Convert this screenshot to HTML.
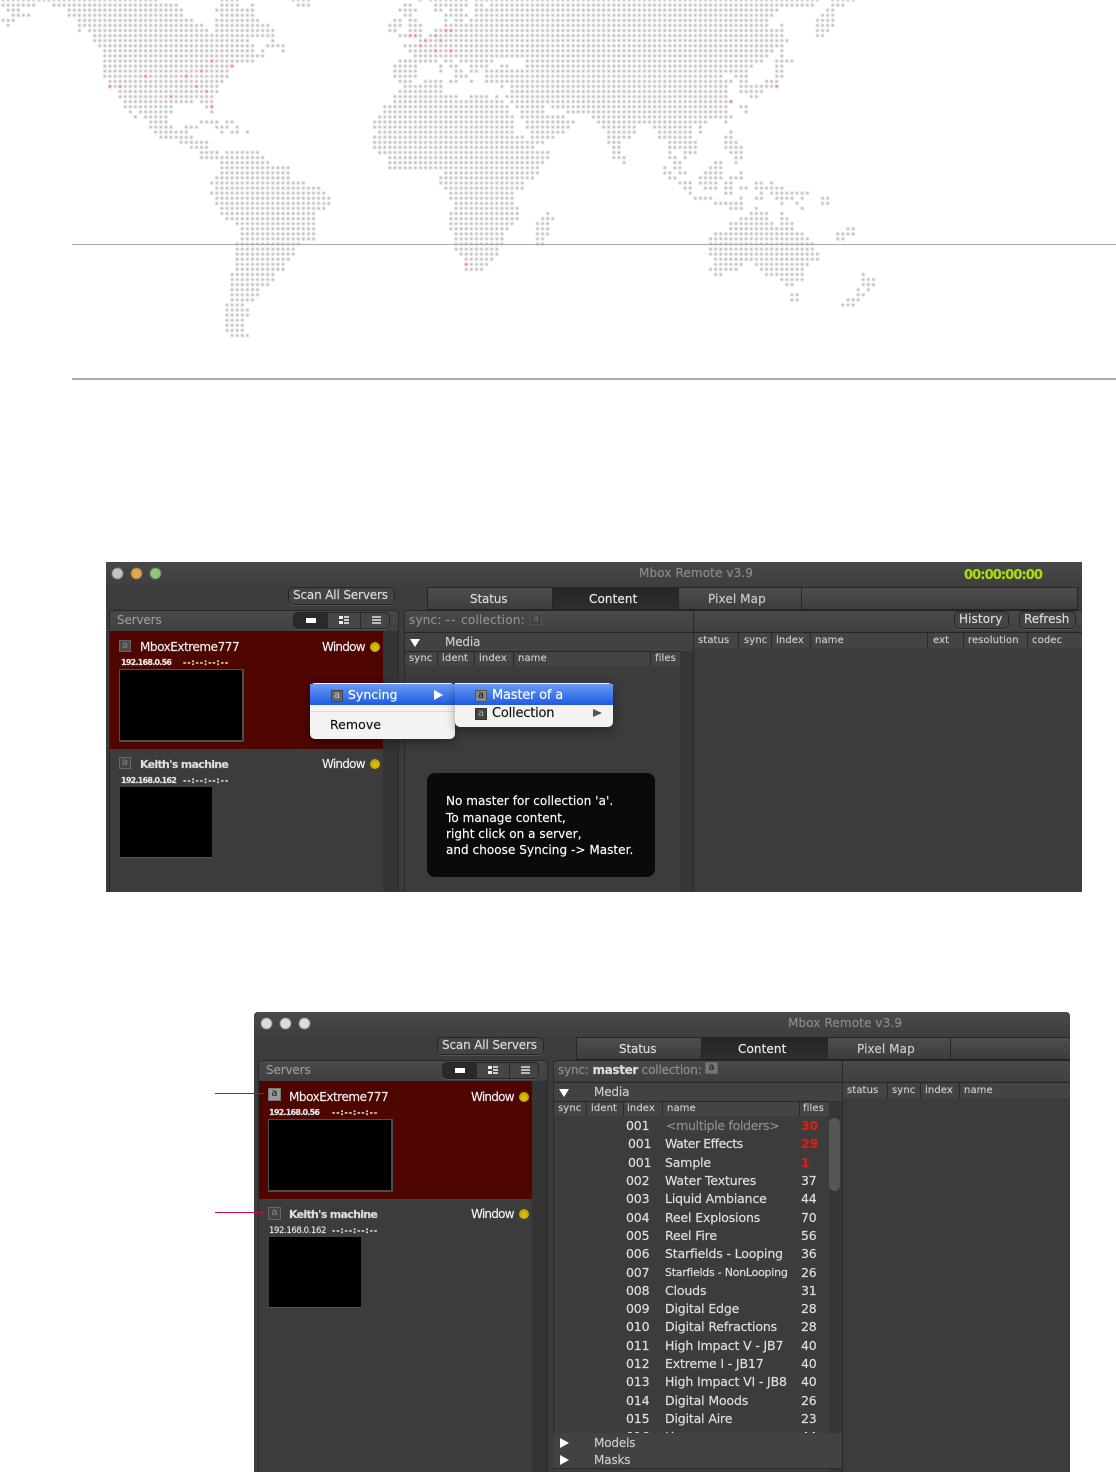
<!DOCTYPE html>
<html><head><meta charset="utf-8"><style>
html,body{margin:0;padding:0;background:#fff}
#p{position:relative;width:1116px;height:1472px;overflow:hidden;background:#fff;font-family:"DejaVu Sans","Liberation Sans",sans-serif}
#p div,#p span.a{position:absolute}
.t{white-space:nowrap;line-height:16px;height:16px;font-size:12px;color:#ddd;letter-spacing:-.15px;-webkit-text-stroke:.15px}
.w{left:0;top:0;width:1116px;height:1022px;filter:blur(.3px)}
.bg{background:#3c3c3c}
.tab{top:587px;height:21px;background:linear-gradient(#4d4d4d,#3d3d3d);border:1px solid #262626;border-bottom-color:#222;box-sizing:content-box}
.btn{background:#444;border:1px solid #262626;border-radius:5px;box-sizing:border-box;box-shadow:0 1px 0 #555}
.hd{background:linear-gradient(#494949,#404040);border-top:1px solid #262626;box-sizing:border-box}
.ln{background:#2a2a2a}
.c{font-size:10px;color:#ccc;letter-spacing:.1px;margin-top:1px}
.c2{margin-top:2px}
.tl{width:11px;height:11px;border-radius:50%;top:568px;filter:blur(.5px)}
.bd{width:12px;height:12px;box-sizing:border-box;font-size:10px;line-height:10px;text-align:center;border:1px solid #666;color:#888}
.dot{width:10px;height:10px;border-radius:50%;background:radial-gradient(circle at 50% 60%,#e2c800,#a89400)}
.s{font-size:8px;font-weight:bold;color:#e5e5e5;letter-spacing:-.75px;margin-top:1px}
.d{font-size:8px;font-weight:bold;color:#e5e5e5;letter-spacing:.9px;margin-top:1px}
.n{font-size:12px;color:#f2f2f2;letter-spacing:-.45px}
.wn{font-size:12px;color:#f2f2f2;letter-spacing:-.75px}
.k{font-size:11px;font-weight:bold;color:#ddd;letter-spacing:-.7px;margin-top:1px}
.r{font-size:12.5px;color:#e0e0e0;letter-spacing:-.15px}
.red{color:#d8201a;font-weight:bold}
.tri{width:0;height:0}
.m{font-size:13px;color:#111;letter-spacing:-.2px}
.ms{letter-spacing:.05px;color:#fff}
</style></head><body><div id="p">

<svg width="1116" height="345" style="position:absolute;left:0;top:0;filter:blur(.4px)">
<g transform="translate(1.67 0) scale(5.09 5.083)" fill="none" stroke-width=".54" stroke-dasharray=".54 .46">
<path stroke="#bdbdbd" d="M0 0H30.6M43 0H46.6M57 0H60.6M82 0H82.6M84 0H91.6M93 0H160.6M163 0H167.6
M0 1H6.6M10 1H34.6M43 1H46.6M49 1H49.6M58 1H60.6M79 1H80.6M85 1H91.6M93 1H94.6M96 1H159.6M163 1H165.6
M1 2H3.6M13 2H35.6M42 2H49.6M78 2H81.6M85 2H86.6M88 2H90.6M93 2H152.6M162 2H163.6
M2 3H5.6M13 3H35.6M43 3H49.6M79 3H80.6M87 3H91.6M93 3H151.6M161 3H163.6
M0 4H2.6M15 4H37.6M42 4H50.6M77 4H78.6M80 4H81.6M87 4H87.6M89 4H90.6M92 4H150.6M160 4H163.6
M1 5H1.6M15 5H39.6M42 5H52.6M76 5H78.6M80 5H82.6M87 5H150.6M153 5H153.6M160 5H163.6
M15 6H15.6M17 6H40.6M42 6H53.6M76 6H77.6M80 6H82.6M85 6H153.6M160 6H162.6
M18 7H53.6M78 7H82.6M84 7H153.6M160 7H161.6
M18 8H48.6M53 8H53.6M82 8H154.6
M19 9H49.6M52 9H55.6M79 9H153.6
M20 10H49.6M51 10H51.6M55 10H55.6M80 10H151.6M153 10H153.6
M20 11H51.6M81 11H150.6M153 11H153.6
M20 12H48.6M49 12H49.6M78 12H85.6M87 12H88.6M90 12H96.6M103 12H149.6M152 12H155.6
M20 13H45.6M77 13H81.6M86 13H86.6M88 13H89.6M92 13H95.6M98 13H99.6M103 13H147.6M152 13H153.6
M20 14H44.6M77 14H81.6M86 14H86.6M89 14H90.6M92 14H93.6M95 14H146.6M152 14H153.6
M20 15H44.6M77 15H81.6M89 15H91.6M95 15H141.6M144 15H146.6M152 15H153.6
M21 16H43.6M78 16H80.6M83 16H86.6M88 16H89.6M92 16H92.6M95 16H143.6M145 16H146.6M150 16H152.6
M21 17H42.6M79 17H86.6M98 17H98.6M100 17H142.6M145 17H152.6
M23 18H42.6M78 18H86.6M100 18H142.6M145 18H149.6
M23 19H41.6M77 19H89.6M92 19H95.6M97 19H97.6M99 19H142.6M147 19H148.6
M24 20H37.6M39 20H41.6M77 20H98.6M100 20H143.6
M24 21H33.6M40 21H41.6M75 21H99.6M101 21H106.6M108 21H142.6M145 21H146.6
M25 22H25.6M27 22H33.6M41 22H41.6M75 22H99.6M102 22H106.6M111 22H142.6M146 22H146.6
M26 23H26.6M28 23H32.6M74 23H100.6M102 23H110.6M116 23H143.6
M29 24H32.6M39 24H42.6M44 24H45.6M73 24H100.6M103 24H112.6M117 24H138.6M142 24H142.6
M29 25H33.6M36 25H38.6M42 25H44.6M46 25H46.6M73 25H100.6M103 25H111.6M118 25H124.6M128 25H135.6M137 25H137.6
M30 26H36.6M43 26H43.6M45 26H46.6M48 26H48.6M74 26H100.6M104 26H110.6M119 26H124.6M129 26H135.6M137 26H137.6M143 26H143.6
M31 27H37.6M73 27H102.6M104 27H108.6M119 27H123.6M129 27H135.6M142 27H143.6
M35 28H40.6M73 28H106.6M119 28H121.6M131 28H136.6M142 28H144.6
M37 29H40.6M73 29H104.6M120 29H121.6M131 29H136.6M142 29H145.6
M39 30H42.6M44 30H50.6M74 30H107.6M120 30H121.6M131 30H131.6M134 30H136.6M143 30H145.6
M39 31H51.6M76 31H107.6M120 31H122.6M131 31H132.6M134 31H134.6M144 31H145.6
M43 32H52.6M76 32H106.6M122 32H122.6M132 32H133.6M140 32H141.6M144 32H144.6
M43 33H56.6M76 33H105.6M130 33H130.6M132 33H133.6M139 33H141.6
M43 34H56.6M87 34H105.6M130 34H131.6M133 34H134.6M138 34H141.6M145 34H145.6
M42 35H56.6M86 35H104.6M131 35H132.6M137 35H141.6M143 35H144.6M145 35H145.6
M41 36H59.6M86 36H102.6M133 36H135.6M137 36H140.6M142 36H143.6M148 36H149.6M151 36H151.6
M42 37H62.6M87 37H102.6M134 37H135.6M138 37H140.6M142 37H143.6M145 37H146.6M148 37H153.6
M41 38H63.6M88 38H100.6M135 38H135.6M142 38H143.6M149 38H149.6M151 38H158.6
M42 39H64.6M88 39H100.6M136 39H139.6M145 39H145.6M148 39H149.6M152 39H155.6M157 39H157.6M161 39H162.6
M42 40H64.6M89 40H100.6M140 40H145.6M153 40H153.6M156 40H156.6M161 40H162.6
M43 41H63.6M89 41H101.6M143 41H145.6M148 41H148.6M157 41H157.6
M43 42H61.6M88 42H101.6M107 42H107.6M147 42H150.6M153 42H153.6
M44 43H61.6M88 43H101.6M106 43H108.6M145 43H150.6M153 43H154.6
M46 44H61.6M88 44H100.6M105 44H107.6M143 44H151.6M153 44H155.6
M47 45H61.6M88 45H99.6M105 45H107.6M143 45H155.6M166 45H167.6
M47 46H61.6M89 46H98.6M105 46H107.6M140 46H157.6M164 46H167.6
M47 47H61.6M89 47H98.6M105 47H106.6M139 47H158.6M164 47H165.6
M46 48H58.6M89 48H98.6M105 48H106.6M139 48H159.6
M46 49H57.6M89 49H97.6M139 49H159.6
M46 50H57.6M90 50H97.6M139 50H160.6
M46 51H56.6M91 51H96.6M140 51H160.6
M46 52H55.6M91 52H95.6M140 52H145.6M148 52H158.6
M46 53H55.6M91 53H94.6M139 53H144.6M149 53H157.6
M45 54H53.6M140 54H141.6M150 54H157.6M169 54H169.6
M45 55H53.6M153 55H157.6M169 55H171.6
M45 56H52.6M154 56H155.6M169 56H171.6
M45 57H50.6M168 57H168.6M170 57H170.6
M45 58H50.6M155 58H156.6M168 58H169.6
M45 59H49.6M155 59H156.6M166 59H168.6
M44 60H47.6M165 60H167.6
M44 61H48.6M44 62H48.6M44 63H47.6M44 64H47.6M44 65H47.6M45 66H48.6"/>
<path stroke="#f07c7c" d="M41 12H41.6M45 13H45.6M39 14H39.6M28 15H28.6M36 15H36.6M21 17H21.6M23 17H23.6M38 17H38.6M40 18H40.6M33 19H33.6M41 21H41.6M87 6H88.6M80 7H81.6M85 7H85.6M83 8H83.6M86 8H86.6M82 9H82.6M85 10H85.6M88 10H88.6M91 52H91.6M152 17H152.6M143 20H143.6"/>
</g></svg>
<div style="left:72px;top:244px;width:1044px;height:1px;background:#aaa"></div>
<div style="left:72px;top:378px;width:1044px;height:2px;background:#aaa"></div>

<!-- WINDOW 1 -->
<div class="w">
<div class="bg" style="left:106px;top:562px;width:976px;height:330px"></div>
<div style="left:106px;top:562px;width:976px;height:25px;background:linear-gradient(#474747,#3e3e3e)"></div>
<div class="tl" style="left:112px;background:#c4c4c4"></div><div class="tl" style="left:131px;background:#e2a64a"></div><div class="tl" style="left:150px;background:#8ec777"></div>
<div class="t" style="left:639px;top:565px;color:#8c8c8c;letter-spacing:.12px">Mbox Remote v3.9</div>
<div class="t" style="left:964px;top:568px;color:#a6dc0a;font-weight:bold;font-size:13px;letter-spacing:-.9px">00:00:00:00</div>
<div class="btn" style="left:288px;top:587px;width:107px;height:18px"></div>
<div class="t" style="left:293px;top:587px;color:#ddd">Scan All Servers</div>
<div class="tab" style="left:427px;width:124px"></div><div class="tab" style="left:552px;width:125px;background:linear-gradient(#262626,#2e2e2e)"></div><div class="tab" style="left:678px;width:122px"></div><div class="tab" style="left:801px;width:275px"></div>
<div class="t" style="left:470px;top:591px;color:#ddd">Status</div><div class="t" style="left:589px;top:591px;color:#eee;letter-spacing:.1px">Content</div><div class="t" style="left:708px;top:591px;color:#ccc;letter-spacing:.1px">Pixel Map</div>

<div class="hd" style="left:109px;top:610px;width:289px;height:21px;border-radius:5px 5px 0 0"></div>
<div class="t" style="left:117px;top:612px;color:#9a9a9a">Servers</div>
<div class="btn" style="left:293px;top:612px;width:97px;height:17px;background:#464646"></div>
<div style="left:294px;top:613px;width:34px;height:15px;background:#2a2a2a;border-radius:4px 0 0 4px"></div>
<div style="left:306px;top:618px;width:10px;height:5px;background:#fff"></div>
<div style="left:360px;top:613px;width:1px;height:15px;background:#2a2a2a"></div>
<div style="left:339px;top:616px;width:4px;height:3px;background:#eee;box-shadow:0 5px 0 #eee"></div><div style="left:344px;top:616px;width:5px;height:9px;background:repeating-linear-gradient(#ccc 0 2px,#444 2px 3px)"></div>
<div style="left:372px;top:616px;width:9px;height:9px;background:repeating-linear-gradient(#bbb 0 2px,#444 2px 3px)"></div>
<div style="left:110px;top:631px;width:273px;height:118px;background:#4f0500"></div>
<div style="left:383px;top:631px;width:15px;height:261px;background:#343434"></div>
<div class="ln" style="left:109px;top:610px;width:1px;height:282px"></div><div class="ln" style="left:398px;top:610px;width:1px;height:282px"></div>
<div class="bd" style="left:119px;top:640px;background:#4a4a4a">a</div>
<div class="t n" style="left:140px;top:639px">MboxExtreme777</div>
<div class="t wn" style="left:322px;top:639px">Window</div><div class="dot" style="left:370px;top:642px"></div>
<div class="t s" style="left:121px;top:654px">192.168.0.56</div><div class="t d" style="left:183px;top:654px">--:--:--:--</div>
<div style="left:119px;top:669px;width:122px;height:70px;background:#000;border:2px solid #4d4d4d;border-width:1px 2px 2px 1px"></div>
<div class="bd" style="left:119px;top:757px;background:#444;border-color:#666">a</div>
<div class="t k" style="left:140px;top:756px">Keith's machine</div>
<div class="t wn" style="left:322px;top:756px">Window</div><div class="dot" style="left:370px;top:759px"></div>
<div class="t s" style="left:121px;top:772px">192.168.0.162</div><div class="t d" style="left:183px;top:772px">--:--:--:--</div>
<div style="left:120px;top:787px;width:92px;height:70px;background:#000;border-bottom:1px solid #555"></div>

<div class="hd" style="left:404px;top:610px;width:289px;height:21px;border-radius:5px 0 0 0"></div>
<div class="t" style="left:409px;top:612px;color:#8f8f8f;letter-spacing:.2px">sync: <span style="letter-spacing:1.4px">--</span> collection:</div>
<div class="bd" style="left:530px;top:613px;background:#3f3f3f;border-color:#555;color:#777">a</div>
<div class="hd" style="left:404px;top:632px;width:289px;height:19px;background:#424242"></div>
<div class="tri" style="left:410px;top:639px;border-left:5px solid transparent;border-right:5px solid transparent;border-top:8px solid #fff"></div>
<div class="t" style="left:445px;top:634px;color:#ccc">Media</div>
<div class="hd" style="left:404px;top:651px;width:276px;height:15px;background:#444"></div>
<div class="t c" style="left:409px;top:650px">sync</div><div class="t c" style="left:442px;top:650px">ident</div><div class="t c" style="left:479px;top:650px">index</div><div class="t c" style="left:518px;top:650px">name</div><div class="t c" style="left:655px;top:650px">files</div>
<div class="ln" style="left:437px;top:652px;width:1px;height:14px"></div><div class="ln" style="left:474px;top:652px;width:1px;height:14px"></div><div class="ln" style="left:513px;top:652px;width:1px;height:14px"></div><div class="ln" style="left:650px;top:652px;width:1px;height:14px"></div>
<div style="left:680px;top:651px;width:13px;height:241px;background:#363636"></div>
<div class="ln" style="left:404px;top:610px;width:1px;height:282px"></div><div class="ln" style="left:693px;top:610px;width:1px;height:282px"></div>

<div class="hd" style="left:694px;top:610px;width:388px;height:21px"></div>
<div class="btn" style="left:954px;top:611px;width:55px;height:18px"></div><div class="t" style="left:959px;top:611px;color:#ddd;letter-spacing:.1px">History</div>
<div class="btn" style="left:1019px;top:611px;width:57px;height:18px"></div><div class="t" style="left:1024px;top:611px;color:#ddd;letter-spacing:0">Refresh</div>
<div class="hd" style="left:694px;top:632px;width:388px;height:16px;background:#444"></div>
<div class="t c c2" style="left:698px;top:631px">status</div><div class="t c c2" style="left:744px;top:631px">sync</div><div class="t c c2" style="left:776px;top:631px">index</div><div class="t c c2" style="left:815px;top:631px">name</div><div class="t c c2" style="left:933px;top:631px">ext</div><div class="t c c2" style="left:968px;top:631px">resolution</div><div class="t c c2" style="left:1032px;top:631px">codec</div>
<div class="ln" style="left:738px;top:633px;width:1px;height:15px"></div><div class="ln" style="left:771px;top:633px;width:1px;height:15px"></div><div class="ln" style="left:810px;top:633px;width:1px;height:15px"></div><div class="ln" style="left:927px;top:633px;width:1px;height:15px"></div><div class="ln" style="left:963px;top:633px;width:1px;height:15px"></div><div class="ln" style="left:1027px;top:633px;width:1px;height:15px"></div>

<div style="left:427px;top:773px;width:228px;height:104px;background:#0a0a0a;border-radius:8px"></div>
<div class="t ms" style="left:446px;top:793px">No master for collection 'a'.</div>
<div class="t ms" style="left:446px;top:810px">To manage content,</div>
<div class="t ms" style="left:446px;top:826px">right click on a server,</div>
<div class="t ms" style="left:446px;top:842px">and choose Syncing -&gt; Master.</div>

<div style="left:310px;top:683px;width:145px;height:56px;background:#f5f3f1;border-radius:5px;box-shadow:0 4px 10px rgba(0,0,0,.35)"></div>
<div style="left:310px;top:684px;width:145px;height:21px;background:linear-gradient(#6b9bf3,#1d5be2)"></div>
<div style="left:310px;top:711px;width:145px;height:1px;background:#ddd"></div>
<div class="bd" style="left:331px;top:690px;background:#666;border-color:#444;color:#ccc">a</div>
<div class="t m" style="left:348px;top:687px;color:#fff;font-size:12.5px;letter-spacing:0">Syncing</div>
<div class="tri" style="left:434px;top:690px;border-top:5px solid transparent;border-bottom:5px solid transparent;border-left:9px solid #fff"></div>
<div class="t m" style="left:330px;top:717px;font-size:12.5px;letter-spacing:.05px">Remove</div>
<div style="left:455px;top:683px;width:158px;height:44px;background:#f5f3f1;border-radius:0 5px 5px 5px;box-shadow:0 4px 10px rgba(0,0,0,.35)"></div>
<div style="left:455px;top:684px;width:158px;height:21px;background:linear-gradient(#6b9bf3,#1d5be2)"></div>
<div class="bd" style="left:475px;top:690px;background:#888;border-color:#555;color:#111">a</div>
<div class="t m" style="left:492px;top:688px;color:#fff">Master of a</div>
<div class="bd" style="left:475px;top:708px;background:#444;border-color:#333;color:#aaa">a</div>
<div class="t m" style="left:492px;top:706px">Collection</div>
<div class="tri" style="left:593px;top:709px;border-top:4.5px solid transparent;border-bottom:4.5px solid transparent;border-left:9px solid #555"></div>
</div>

<!-- WINDOW 2 -->
<div class="w" style="left:149px;top:450px">
<div class="bg" style="left:105px;top:562px;width:816px;height:460px;border-radius:4px 4px 0 0"></div>
<div style="left:105px;top:562px;width:816px;height:25px;background:linear-gradient(#494949,#3e3e3e);border-radius:4px 4px 0 0"></div>
<div class="tl" style="left:112px;background:#ddd"></div><div class="tl" style="left:131px;background:#ddd"></div><div class="tl" style="left:150px;background:#ddd"></div>
<div class="t" style="left:639px;top:565px;color:#8c8c8c;letter-spacing:.12px">Mbox Remote v3.9</div>
<div class="btn" style="left:288px;top:587px;width:107px;height:18px"></div>
<div class="t" style="left:293px;top:587px;color:#ddd">Scan All Servers</div>
<div class="tab" style="left:427px;width:124px"></div><div class="tab" style="left:552px;width:125px;background:linear-gradient(#262626,#2e2e2e)"></div><div class="tab" style="left:678px;width:122px"></div><div class="tab" style="left:801px;width:119px;border-right:0"></div>
<div class="t" style="left:470px;top:591px;color:#ddd">Status</div><div class="t" style="left:589px;top:591px;color:#eee;letter-spacing:.1px">Content</div><div class="t" style="left:708px;top:591px;color:#ccc;letter-spacing:.1px">Pixel Map</div>

<div class="hd" style="left:109px;top:610px;width:289px;height:21px;border-radius:5px 5px 0 0"></div>
<div class="t" style="left:117px;top:612px;color:#9a9a9a">Servers</div>
<div class="btn" style="left:293px;top:612px;width:97px;height:17px;background:#464646"></div>
<div style="left:294px;top:613px;width:34px;height:15px;background:#2a2a2a;border-radius:4px 0 0 4px"></div>
<div style="left:306px;top:618px;width:10px;height:5px;background:#fff"></div>
<div style="left:360px;top:613px;width:1px;height:15px;background:#2a2a2a"></div>
<div style="left:339px;top:616px;width:4px;height:3px;background:#eee;box-shadow:0 5px 0 #eee"></div><div style="left:344px;top:616px;width:5px;height:9px;background:repeating-linear-gradient(#ccc 0 2px,#444 2px 3px)"></div>
<div style="left:372px;top:616px;width:9px;height:9px;background:repeating-linear-gradient(#bbb 0 2px,#444 2px 3px)"></div>
<div style="left:110px;top:631px;width:273px;height:118px;background:#4f0500"></div>
<div style="left:383px;top:631px;width:15px;height:391px;background:#343434"></div>
<div class="ln" style="left:109px;top:610px;width:1px;height:412px"></div><div class="ln" style="left:398px;top:610px;width:1px;height:412px"></div>
<div class="bd" style="left:119px;top:638px;background:#999;border-color:#777;color:#111;width:13px;height:13px">a</div>
<div class="t n" style="left:140px;top:639px">MboxExtreme777</div>
<div class="t wn" style="left:322px;top:639px">Window</div><div class="dot" style="left:370px;top:642px"></div>
<div class="t s" style="left:120px;top:654px">192.168.0.56</div><div class="t d" style="left:183px;top:654px">--:--:--:--</div>
<div style="left:119px;top:669px;width:122px;height:70px;background:#000;border:2px solid #4d4d4d;border-width:1px 2px 2px 1px"></div>
<div class="bd" style="left:119px;top:757px;background:#444;border-color:#666;width:13px;height:13px">a</div>
<div class="t k" style="left:140px;top:756px">Keith's machine</div>
<div class="t wn" style="left:322px;top:756px">Window</div><div class="dot" style="left:370px;top:759px"></div>
<div class="t s" style="left:120px;top:772px;font-weight:normal;font-size:8.5px;letter-spacing:-.4px">192.168.0.162</div><div class="t d" style="left:183px;top:772px">--:--:--:--</div>
<div style="left:120px;top:787px;width:92px;height:70px;background:#000;border-bottom:1px solid #555"></div>

<div class="hd" style="left:404px;top:610px;width:289px;height:21px;border-radius:5px 0 0 0"></div>
<div class="t" style="left:409px;top:612px;color:#8f8f8f">sync: <b style="color:#ddd;letter-spacing:-.35px">master</b> collection:</div>
<div class="bd" style="left:556px;top:612px;background:#777;border-color:#666;color:#111;width:13px;height:12px">a</div>
<div class="hd" style="left:404px;top:632px;width:289px;height:19px;background:#424242"></div>
<div class="tri" style="left:410px;top:639px;border-left:5px solid transparent;border-right:5px solid transparent;border-top:8px solid #fff"></div>
<div class="t" style="left:445px;top:634px;color:#ccc">Media</div>
<div class="hd" style="left:404px;top:651px;width:276px;height:15px;background:#444"></div>
<div class="t c" style="left:409px;top:650px">sync</div><div class="t c" style="left:442px;top:650px">ident</div><div class="t c" style="left:478px;top:650px">index</div><div class="t c" style="left:518px;top:650px">name</div><div class="t c" style="left:654px;top:650px">files</div>
<div class="ln" style="left:437px;top:652px;width:1px;height:14px"></div><div class="ln" style="left:474px;top:652px;width:1px;height:14px"></div><div class="ln" style="left:513px;top:652px;width:1px;height:14px"></div><div class="ln" style="left:650px;top:652px;width:1px;height:14px"></div>
<div style="left:680px;top:651px;width:13px;height:371px;background:#363636"></div>
<div style="left:680px;top:668px;width:11px;height:73px;background:#565656;border-radius:6px"></div>
<div class="ln" style="left:404px;top:610px;width:1px;height:412px"></div><div class="ln" style="left:693px;top:610px;width:1px;height:412px"></div>

<div class="t r" style="left:477px;top:668px">001</div><div class="t r" style="left:517px;top:668px;color:#8f8f8f;letter-spacing:-.3px">&lt;multiple folders&gt;</div><div class="t r red" style="left:652px;top:668px">30</div>
<div class="t r" style="left:479px;top:686px">001</div><div class="t r" style="left:516px;top:686px;letter-spacing:-.45px">Water Effects</div><div class="t r red" style="left:652px;top:686px">29</div>
<div class="t r" style="left:479px;top:705px">001</div><div class="t r" style="left:516px;top:705px">Sample</div><div class="t r red" style="left:652px;top:705px">1</div>
<div class="t r" style="left:477px;top:723px">002</div><div class="t r" style="left:516px;top:723px">Water Textures</div><div class="t r" style="left:652px;top:723px">37</div>
<div class="t r" style="left:477px;top:741px">003</div><div class="t r" style="left:516px;top:741px">Liquid Ambiance</div><div class="t r" style="left:652px;top:741px">44</div>
<div class="t r" style="left:477px;top:760px">004</div><div class="t r" style="left:516px;top:760px">Reel Explosions</div><div class="t r" style="left:652px;top:760px">70</div>
<div class="t r" style="left:477px;top:778px">005</div><div class="t r" style="left:516px;top:778px">Reel Fire</div><div class="t r" style="left:652px;top:778px">56</div>
<div class="t r" style="left:477px;top:796px">006</div><div class="t r" style="left:516px;top:796px">Starfields - Looping</div><div class="t r" style="left:652px;top:796px">36</div>
<div class="t r" style="left:477px;top:815px">007</div><div class="t r" style="left:516px;top:815px;font-size:11px;letter-spacing:-.25px">Starfields - NonLooping</div><div class="t r" style="left:652px;top:815px">26</div>
<div class="t r" style="left:477px;top:833px">008</div><div class="t r" style="left:516px;top:833px">Clouds</div><div class="t r" style="left:652px;top:833px">31</div>
<div class="t r" style="left:477px;top:851px">009</div><div class="t r" style="left:516px;top:851px">Digital Edge</div><div class="t r" style="left:652px;top:851px">28</div>
<div class="t r" style="left:477px;top:869px">010</div><div class="t r" style="left:516px;top:869px">Digital Refractions</div><div class="t r" style="left:652px;top:869px">28</div>
<div class="t r" style="left:477px;top:888px">011</div><div class="t r" style="left:516px;top:888px">High Impact V - JB7</div><div class="t r" style="left:652px;top:888px">40</div>
<div class="t r" style="left:477px;top:906px">012</div><div class="t r" style="left:516px;top:906px">Extreme I - JB17</div><div class="t r" style="left:652px;top:906px">40</div>
<div class="t r" style="left:477px;top:924px">013</div><div class="t r" style="left:516px;top:924px">High Impact VI - JB8</div><div class="t r" style="left:652px;top:924px">40</div>
<div class="t r" style="left:477px;top:943px">014</div><div class="t r" style="left:516px;top:943px">Digital Moods</div><div class="t r" style="left:652px;top:943px">26</div>
<div class="t r" style="left:477px;top:961px">015</div><div class="t r" style="left:516px;top:961px">Digital Aire</div><div class="t r" style="left:652px;top:961px">23</div>
<div class="t r" style="left:477px;top:979px">016</div><div class="t r" style="left:516px;top:979px">Haze</div><div class="t r" style="left:652px;top:979px">44</div>

<div style="left:404px;top:983px;width:289px;height:35px;background:#424242"></div>
<div class="ln" style="left:404px;top:1018px;width:289px;height:1px"></div>
<div class="tri" style="left:411px;top:988px;border-top:5px solid transparent;border-bottom:5px solid transparent;border-left:9px solid #fff"></div>
<div class="tri" style="left:411px;top:1005px;border-top:5px solid transparent;border-bottom:5px solid transparent;border-left:9px solid #fff"></div>
<div class="t" style="left:445px;top:985px;color:#ccc">Models</div>
<div class="t" style="left:445px;top:1002px;color:#ccc">Masks</div>

<div class="hd" style="left:694px;top:610px;width:227px;height:21px"></div>
<div class="hd" style="left:694px;top:632px;width:227px;height:16px;background:#444"></div>
<div class="t c c2" style="left:698px;top:631px">status</div><div class="t c c2" style="left:743px;top:631px">sync</div><div class="t c c2" style="left:776px;top:631px">index</div><div class="t c c2" style="left:815px;top:631px">name</div>
<div class="ln" style="left:738px;top:633px;width:1px;height:15px"></div><div class="ln" style="left:771px;top:633px;width:1px;height:15px"></div><div class="ln" style="left:810px;top:633px;width:1px;height:15px"></div>
</div>

<div style="left:215px;top:1093px;width:49px;height:1px;background:#d4004c"></div>
<div style="left:215px;top:1212px;width:49px;height:1px;background:#d4004c"></div>
</div></body></html>
